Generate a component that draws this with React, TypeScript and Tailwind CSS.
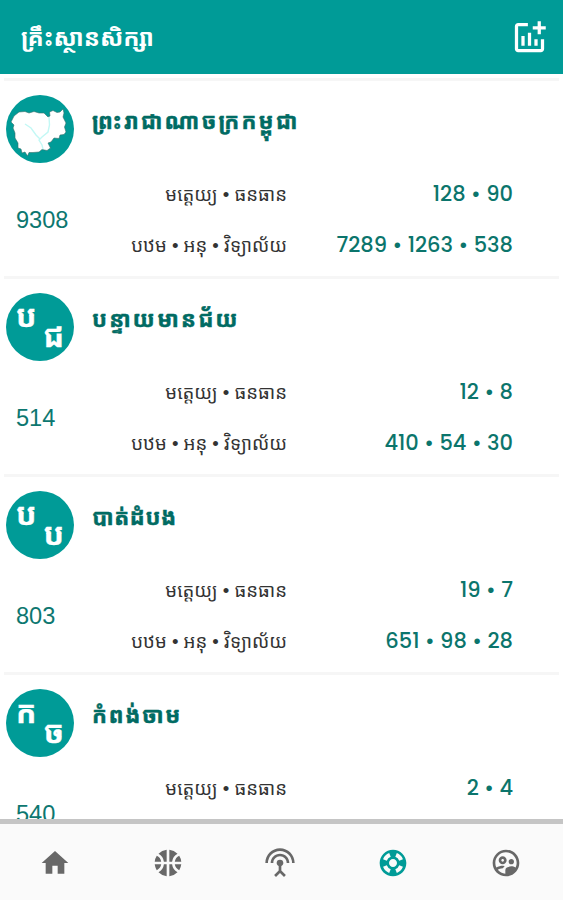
import {
  MdAddchart,
  MdHome,
  MdOutlineSupervisedUserCircle,
  MdSettingsInputAntenna,
  MdSportsBasketball,
  MdSupport,
} from "react-icons/md";

type Province = {
  name: string;
  nameClass: string;
  initials?: [string, string];
  total: string;
  lower: string;
  upper?: string;
};

const provinces: Province[] = [
  {
    name: "ព្រះរាជាណាចក្រកម្ពុជា",
    nameClass: "tracking-[2.1px]",
    total: "9308",
    lower: "128 • 90",
    upper: "7289 • 1263 • 538",
  },
  {
    name: "បន្ទាយមានជ័យ",
    nameClass: "tracking-[2.3px]",
    initials: ["ប", "ជ"],
    total: "514",
    lower: "12 • 8",
    upper: "410 • 54 • 30",
  },
  {
    name: "បាត់ដំបង",
    nameClass: "tracking-[0.6px]",
    initials: ["ប", "ប"],
    total: "803",
    lower: "19 • 7",
    upper: "651 • 98 • 28",
  },
  {
    name: "កំពង់ចាម",
    nameClass: "tracking-[1.7px]",
    initials: ["ក", "ច"],
    total: "540",
    lower: "2 • 4",
  },
];

const tabs = [
  { id: "home", Icon: MdHome },
  { id: "sports", Icon: MdSportsBasketball },
  { id: "broadcast", Icon: MdSettingsInputAntenna },
  { id: "support", Icon: MdSupport },
  { id: "people", Icon: MdOutlineSupervisedUserCircle },
];

function CambodiaMap() {
  return (
    <svg viewBox="0 0 68 68" className="size-[68px]">
      <path
        d="M5 27L8 21L13 17L19 16.5L23 18L28 16.5L33 18L38 18L42 22L44 21L43.5 17L47 15.5L51 17.5L54 17L57 14L58 18L57 22L60 28L58.5 32L60 37L58 39.5L54 40L53 43.5L48 43L45 47L42 48L44.5 53L41 55.5L36 54.5L33 57L27 57.5L23 57.5L21.5 61L19 57L16 58L15 54L12 53L12 48L9 43L9 38L7 33L8 30Z"
        fill="#fff"
        stroke="#35706c"
        strokeWidth=".6"
        strokeLinejoin="round"
      />
      <path
        d="M43 22L43.5 30L42 37L36 42L33 45L36 50L37 54M19 29L25 33L30 40L34 44"
        fill="none"
        stroke="#c3f8f5"
        strokeWidth="1.4"
      />
    </svg>
  );
}

function Avatar({ initials }: { initials?: [string, string] }) {
  return (
    <div className="size-[68px] shrink-0 overflow-hidden rounded-full bg-[#009b97] text-white">
      {initials ? (
        <div className="flex justify-between px-[10px] pt-[9px] text-[30px] leading-[30px] font-bold [-webkit-text-stroke:0.4px_currentColor]">
          <span>{initials[0]}</span>
          <span className="pt-[20px]">{initials[1]}</span>
        </div>
      ) : (
        <CambodiaMap />
      )}
    </div>
  );
}

function ProvinceRow({ name, nameClass, initials, total, lower, upper }: Province) {
  return (
    <section className="mx-1 h-[198px] shrink-0 border-t-3 border-[#f6f6f6] pt-[14px] pl-[2px]">
      <div className="flex">
        <Avatar initials={initials} />
        <h2
          className={`pt-[8px] pl-[18px] text-[22px] leading-[38px] font-bold whitespace-nowrap text-[#006b63] [-webkit-text-stroke:0.5px_currentColor] ${nameClass}`}
        >
          {name}
        </h2>
      </div>
      <div className="flex">
        <div className="w-[90px] pt-[42px] pl-[10px] text-[23.6px] leading-[30px] text-[#0d7770]">
          {total}
        </div>
        <div className="flex w-[191px] flex-col items-end pt-[6px] text-[18.6px] leading-[51px] whitespace-nowrap text-[#333]">
          <span>មត្តេយ្យ • ធនធាន</span>
          {upper && <span>បឋម • អនុ • វិទ្យាល័យ</span>}
        </div>
        <div className="flex w-[226px] flex-col items-end pt-[5px] font-['Poppins','Inter',sans-serif] text-[21px] leading-[51px] font-medium whitespace-nowrap text-[#0b756c]">
          <span>{lower}</span>
          {upper && <span>{upper}</span>}
        </div>
      </div>
    </section>
  );
}

export default function App() {
  return (
    <div className="flex h-[900px] w-[563px] flex-col overflow-hidden bg-white font-['Liberation_Sans','Noto_Sans_Khmer',sans-serif]">
      <header className="flex h-[74px] shrink-0 items-center justify-between bg-[#009b97] pr-[14px] pl-[21px] text-white">
        <h1 className="pt-px text-[24px] leading-[40px] font-bold">គ្រឹះស្ថានសិក្សា</h1>
        <MdAddchart className="size-[39px]" />
      </header>

      <main className="flex min-h-0 flex-1 flex-col overflow-hidden pt-[4px]">
        {provinces.map((p) => (
          <ProvinceRow key={p.name} {...p} />
        ))}
      </main>

      <nav className="flex h-[81px] shrink-0 items-center border-t-[5px] border-[#c5c5c5] bg-[#fafafa] pt-[2px]">
        {tabs.map(({ id, Icon }) => (
          <button
            key={id}
            className={
              id === "support"
                ? "flex flex-1 justify-center pr-[2px] text-[#009b97]"
                : "flex flex-1 justify-center pr-[2px] text-[#686868]"
            }
          >
            <Icon className="size-8" />
          </button>
        ))}
      </nav>
    </div>
  );
}
